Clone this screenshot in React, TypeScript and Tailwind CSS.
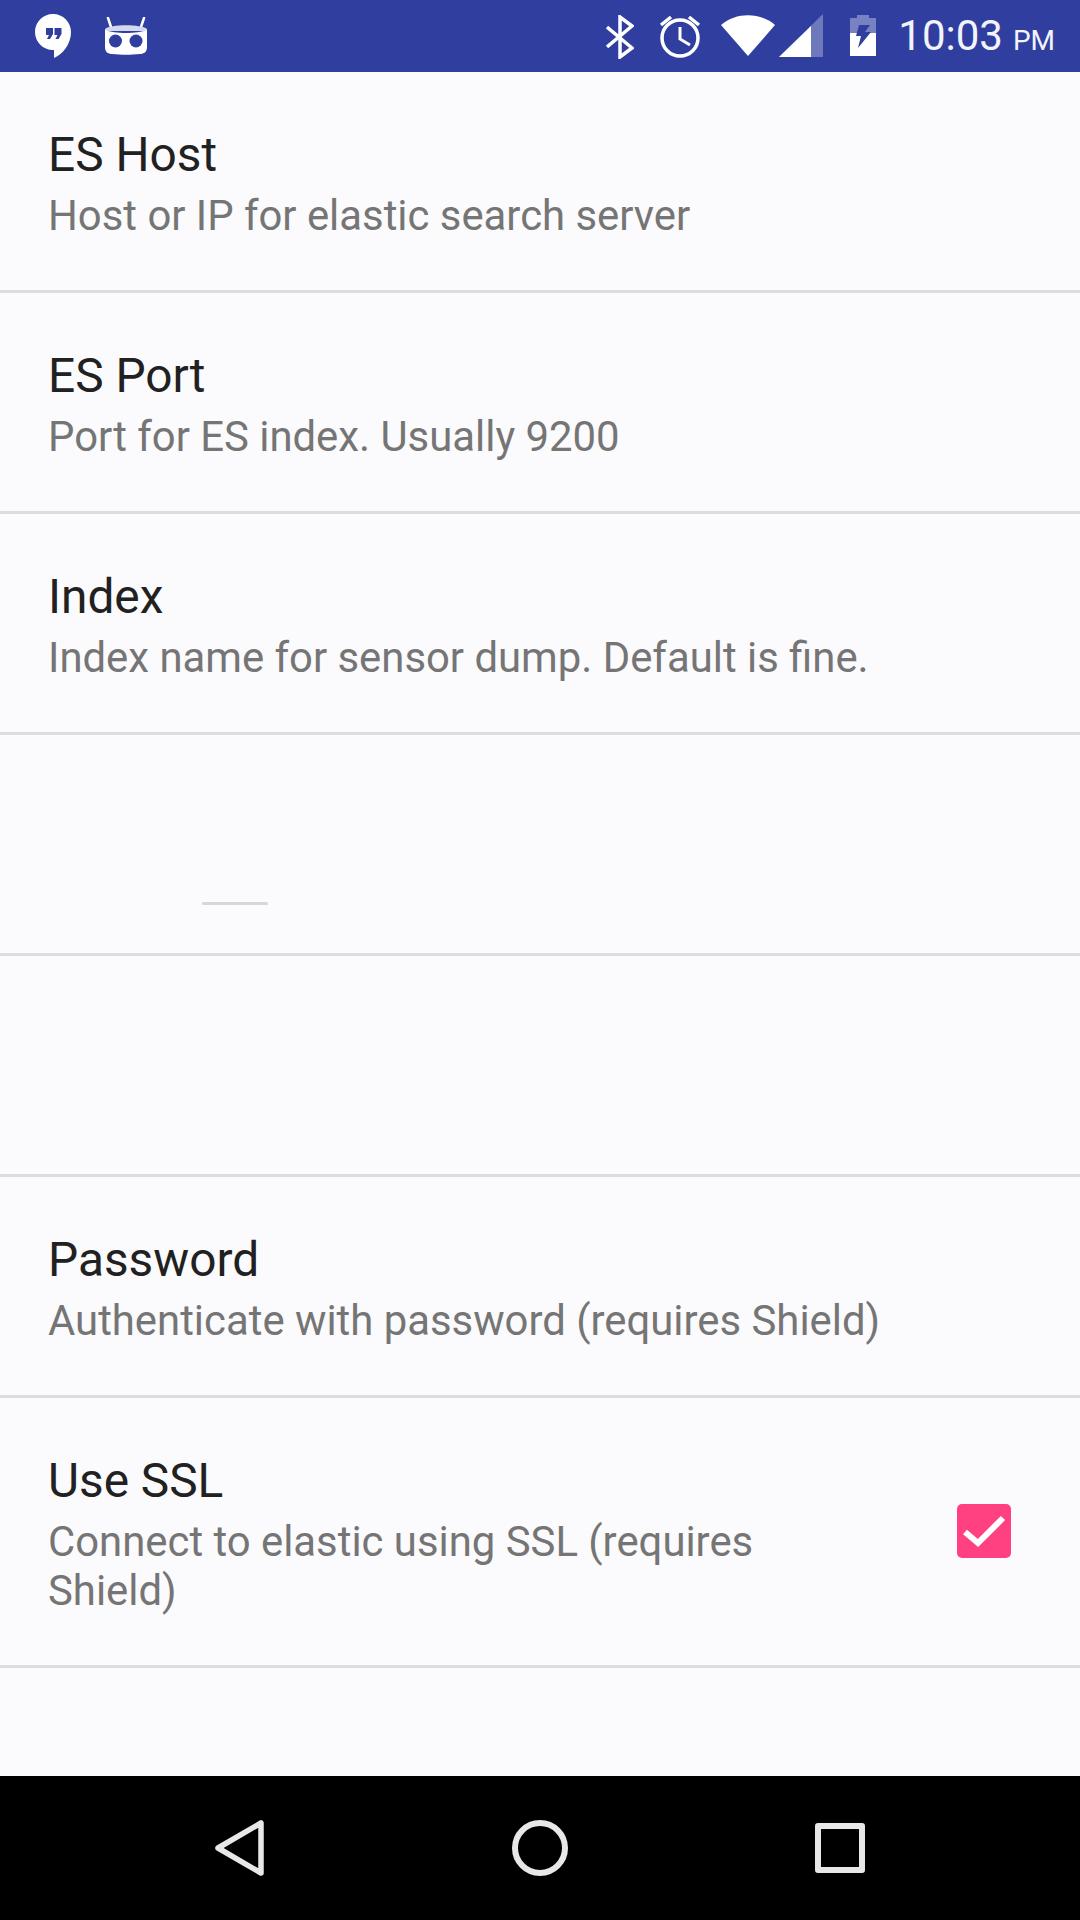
interface PrefRow {
  title?: string
  summary?: string
  checked?: boolean
  smudge?: boolean
  tall?: boolean
}

const rows: PrefRow[] = [
  { title: 'ES Host', summary: 'Host or IP for elastic search server' },
  { title: 'ES Port', summary: 'Port for ES index. Usually 9200' },
  { title: 'Index', summary: 'Index name for sensor dump. Default is fine.' },
  { smudge: true },
  {},
  { title: 'Password', summary: 'Authenticate with password (requires Shield)' },
  { title: 'Use SSL', summary: 'Connect to elastic using SSL (requires Shield)', checked: true, tall: true },
]

function StatusBar() {
  return (
    <div className="flex h-[72px] shrink-0 items-center justify-between bg-[#303f9f] pl-[35px] pr-[25px] text-white">
      <div className="flex items-center gap-[33px]">
        {/* hangouts */}
        <svg width="36" height="44" viewBox="0 0 36 44">
          <path d="M18 0C8 0 0 8 0 18s8 18 18 18h1v8c9-4 17-14 17-26C36 8 28 0 18 0z" fill="#fff" />
          <path d="M11 14h7v6l-3 5h-3l2-4h-3zM19.500 14h7v6l-3 5h-3l2-4h-3z" fill="#303f9f" />
        </svg>
        {/* cyanogenmod bot */}
        <svg width="44" height="38" viewBox="0 0 44 38">
          <path d="M4 1l3 9M40 1l-3 9" stroke="#fff" strokeWidth="2.500" strokeLinecap="round" />
          <path d="M1 12c6-5 36-5 42 0v2H1z" fill="#d5d9ee" />
          <path d="M1 13c10 4 32 4 42 0v17c0 5-3 7-7 7-10 1-18 1-28 0-4 0-7-2-7-7z" fill="#fff" />
          <circle cx="11.500" cy="24" r="6.500" fill="#303f9f" />
          <circle cx="32" cy="24" r="6.500" fill="#303f9f" />
        </svg>
      </div>
      <div className="flex items-center">
        {/* bluetooth */}
        <svg width="28" height="44" viewBox="0 0 28 44" className="mt-[1px]" fill="none" stroke="#fff" strokeWidth="3.500">
          <path d="M1 12l25 21-12 9V2l12 9L1 32" />
        </svg>
        {/* alarm */}
        <svg width="42" height="44" viewBox="0 0 42 44" className="ml-[25px]" fill="none" stroke="#fff">
          <circle cx="21" cy="24" r="18" strokeWidth="3.500" />
          <path d="M21 13v12l10 6" strokeWidth="3" />
          <path d="M2 11l10-8M40 11L30 3" strokeWidth="3.500" />
        </svg>
        {/* wifi */}
        <svg width="54" height="44" viewBox="0 0 54 44" className="ml-[20px]">
          <path d="M0 11C15-2 39-2 54 11L27 42z" fill="#fff" />
        </svg>
        {/* signal */}
        <svg width="44" height="44" viewBox="0 0 44 44" className="ml-[4px]">
          <path d="M44 0v43H0z" fill="#fff" fillOpacity="0.3" />
          <path d="M32 12v31H0z" fill="#fff" />
        </svg>
        {/* battery charging */}
        <svg width="28" height="42" viewBox="0 0 28 42" className="ml-[26px]">
          <path d="M8 0h12v3h7v17H1V3h7z" fill="#fff" fillOpacity="0.35" />
          <path d="M1 18h26v23H1z" fill="#fff" />
          <path d="M10 10h11l-5 7h6L9 33l3-12H7z" fill="#303f9f" />
        </svg>
        <div className="ml-[21px] flex items-baseline font-['Roboto',sans-serif] text-[42px] leading-none text-[#f2f3fb]">
          10:03
          <span className="ml-[10px] text-[28px]">PM</span>
        </div>
      </div>
    </div>
  )
}

function PrefItem({ title, summary, checked, smudge, tall }: PrefRow) {
  return (
    <div className={`relative flex border-b-[3px] border-[#dddcdf] ${tall ? 'h-[270px]' : 'h-[221px]'}`}>
      {title && (
        <div className={`flex flex-col pl-[48px] pt-[53px] ${checked ? 'w-[800px]' : 'w-full'}`}>
          <div className="font-['Roboto',sans-serif] text-[47.800px] leading-[60px] text-[#212121]">{title}</div>
          <div className="mt-[6px] font-['Roboto',sans-serif] text-[41.850px] leading-[49px] text-[#757575]">{summary}</div>
        </div>
      )}
      {checked && (
        <div className="absolute left-[957px] top-[106px] h-[54px] w-[54px] rounded-[5px] bg-[#ff4081]">
          <svg width="54" height="54" viewBox="0 0 54 54" fill="none" stroke="#fff" strokeWidth="6">
            <path d="M8 28l13 11L46 14" />
          </svg>
        </div>
      )}
      {smudge && <div className="absolute left-[202px] top-[167px] h-[3px] w-[66px] rounded-full bg-[#d8d6da]" />}
    </div>
  )
}

export default function App() {
  return (
    <div className="flex h-[1920px] w-[1080px] flex-col overflow-hidden bg-[#fbfafc]">
      <StatusBar />
      <div className="flex-1">
        {rows.map((r, i) => (
          <PrefItem key={i} {...r} />
        ))}
      </div>
      <div className="grid h-[144px] shrink-0 grid-cols-[300px_300px_300px] justify-center bg-black pt-[44px]">
        <div className="flex justify-center">
          <svg width="50" height="56" viewBox="0 0 50 56" fill="none" stroke="#e8e8e8" strokeWidth="5.500" strokeLinejoin="round">
            <path d="M46 3v50L3 28z" />
          </svg>
        </div>
        <div className="flex justify-center">
          <svg width="56" height="56" viewBox="0 0 56 56" fill="none" stroke="#e8e8e8" strokeWidth="6">
            <circle cx="28" cy="28" r="25" />
          </svg>
        </div>
        <div className="flex justify-center pt-[3px]">
          <svg width="50" height="50" viewBox="0 0 50 50" fill="none" stroke="#e8e8e8" strokeWidth="6" strokeLinejoin="round">
            <rect x="3" y="3" width="44" height="44" />
          </svg>
        </div>
      </div>
    </div>
  )
}
